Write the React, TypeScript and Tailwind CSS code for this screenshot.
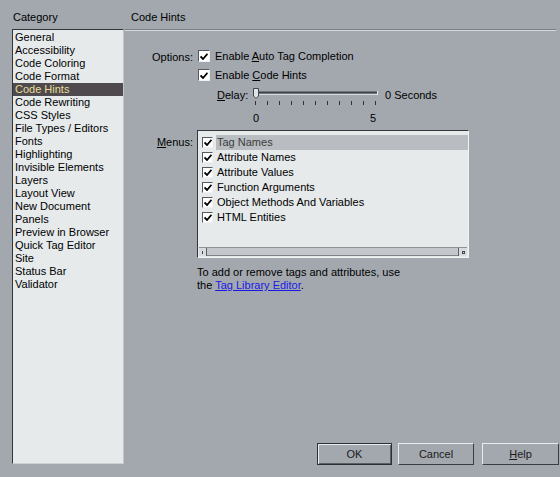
import React, { useState } from "react";

const categories = [
  "General",
  "Accessibility",
  "Code Coloring",
  "Code Format",
  "Code Hints",
  "Code Rewriting",
  "CSS Styles",
  "File Types / Editors",
  "Fonts",
  "Highlighting",
  "Invisible Elements",
  "Layers",
  "Layout View",
  "New Document",
  "Panels",
  "Preview in Browser",
  "Quick Tag Editor",
  "Site",
  "Status Bar",
  "Validator",
];

const menuItems = [
  "Tag Names",
  "Attribute Names",
  "Attribute Values",
  "Function Arguments",
  "Object Methods And Variables",
  "HTML Entities",
];

function Check({ size = 12 }: { size?: number }) {
  return (
    <span
      className="inline-flex items-center justify-center bg-white border border-t-[#55595e] border-l-[#55595e] border-b-[#eef0f2] border-r-[#eef0f2] shrink-0"
      style={{ width: size, height: size }}
    >
      <svg width="8" height="7" viewBox="0 0 8 7">
        <path d="M0.5 3.5 L3 6 L7.5 0.8" fill="none" stroke="#000" strokeWidth="1.8" />
      </svg>
    </span>
  );
}

function DelaySlider() {
  const ticks = Array.from({ length: 11 }, (_, i) => 2 + i * 12);
  return (
    <svg width="126" height="18" viewBox="0 0 126 18" className="block">
      <line x1="1" y1="4.5" x2="124" y2="4.5" stroke="#3f4348" strokeWidth="2" />
      <line x1="1" y1="6.5" x2="124" y2="6.5" stroke="#d8dce0" strokeWidth="1" />
      <line x1="124.5" y1="3" x2="124.5" y2="7" stroke="#e8ecee" strokeWidth="1" />
      {ticks.map((x) => (
        <line key={x} x1={x + 0.5} y1="13" x2={x + 0.5} y2="17" stroke="#2e3236" strokeWidth="1" />
      ))}
      <path d="M0.5 0.5 H5.5 V8 L3 10.5 L0.5 8 Z" fill="#dfe3e6" stroke="#40454a" strokeWidth="1" />
    </svg>
  );
}

export default function App() {
  const [selected, setSelected] = useState("Code Hints");

  return (
    <div
      className="w-[560px] h-[477px] bg-[#a3a8ae] flex text-[11px] leading-[13px] text-black overflow-hidden"
      style={{ fontFamily: '"Liberation Sans", Arial, sans-serif' }}
    >
      {/* Category list */}
      <div className="w-[125px] pl-[12px] flex flex-col">
        <div className="h-[29px] pt-[11px] pl-[1px]">Category</div>
        <div className="w-[112px] h-[435px] bg-[#e6eaeb] border border-t-[#33363a] border-l-[#33363a] border-b-[#cdd1d5] border-r-[#c2c6ca] pt-[1px]">
          {categories.map((c) => (
            <div
              key={c}
              onClick={() => setSelected(c)}
              className={
                "h-[13px] pl-[2px] whitespace-nowrap cursor-default " +
                (c === selected ? "bg-[#4f4a4e] text-[#eadc98]" : "")
              }
            >
              {c}
            </div>
          ))}
        </div>
      </div>

      {/* Settings panel */}
      <div className="flex-1 flex flex-col">
        <div className="h-[30px] pt-[11px] pl-[6px] border-b border-b-[#7a7f85] shadow-[0_1px_0_#d6dadd] mr-[4px]">
          Code Hints
        </div>

        <div className="grid grid-cols-[72px_1fr] mt-[20px]">
          <div className="h-[19px] pr-[4px] text-right pt-[1px]">Options:</div>
          <div className="h-[19px] flex items-start gap-[5px] pl-[1px]">
            <Check />
            <span>
              Enable <u>A</u>uto Tag Completion
            </span>
          </div>

          <div />
          <div className="h-[19px] flex items-start gap-[5px] pl-[1px]">
            <Check />
            <span>
              Enable <u>C</u>ode Hints
            </span>
          </div>

          <div />
          <div className="flex items-start pl-[20px] pt-[1px]">
            <span className="w-[36px]">
              <u>D</u>elay:
            </span>
            <div className="flex flex-col mt-[-1px]">
              <DelaySlider />
              <div className="flex justify-between w-[124px] pr-[1px] mt-[6px]">
                <span>0</span>
                <span>5</span>
              </div>
            </div>
            <span className="ml-[6px]">0 Seconds</span>
          </div>

          <div className="pr-[4px] text-right pt-[11px]">
            <u>M</u>enus:
          </div>
          <div className="mt-[5px]">
            <div className="w-[272px] h-[128px] bg-[#e6eaeb] border border-t-[#33363a] border-l-[#33363a] border-b-[#f0f2f4] border-r-[#f0f2f4] flex flex-col pt-[4px]">
              <div className="flex-1">
                {menuItems.map((m, i) => (
                  <div key={m} className="h-[15px] flex items-center pl-[4px]">
                    <Check size={11} />
                    <span
                      className={
                        "ml-[3px] pl-[1px] h-[15px] flex items-center " +
                        (i === 0 ? "flex-1 bg-[#b9bdc1] text-[#3c3c3c]" : "")
                      }
                    >
                      {m}
                    </span>
                  </div>
                ))}
              </div>
              {/* horizontal scrollbar */}
              <div className="h-[9px] mx-[1px] mb-[1px] flex bg-[#c4c8cc] border-t border-t-[#8d9297]">
                <div className="w-[8px] h-full bg-[#d8dcdf] border-r border-r-[#5d6267] flex items-center justify-center">
                  <div className="w-[1px] h-[3px] bg-[#444]" />
                </div>
                <div className="flex-1 border-b border-b-[#7f8489]" />
                <div className="w-[9px] h-full bg-[#d8dcdf] border-l border-l-[#5d6267] flex items-center justify-center">
                  <div className="w-[3px] h-[3px] border border-[#444]" />
                </div>
              </div>
            </div>
            <div className="mt-[8px] leading-[13px]">
              <div>To add or remove tags and attributes, use</div>
              <div>
                the{" "}
                <a href="#" className="text-[#1919e6] underline">
                  Tag Library Editor
                </a>
                .
              </div>
            </div>
          </div>
        </div>

        <div className="mt-auto mb-[12px] flex gap-[6px] pl-[192px]">
          <button className="w-[75px] h-[22px] bg-[#a3a8ae] border border-[#2c2f33] shadow-[inset_1px_1px_0_#e8ecee,inset_-1px_-1px_0_#5a5f64] text-[#1a1a1a]">
            OK
          </button>
          <button className="w-[76px] h-[22px] bg-[#a3a8ae] border border-t-[#e8ecee] border-l-[#e8ecee] border-b-[#3a3e42] border-r-[#3a3e42] text-[#1a1a1a]">
            Cancel
          </button>
          <button className="w-[77px] h-[22px] ml-[2px] bg-[#a3a8ae] border border-t-[#e8ecee] border-l-[#e8ecee] border-b-[#3a3e42] border-r-[#3a3e42] text-[#1a1a1a]">
            <u>H</u>elp
          </button>
        </div>
      </div>
    </div>
  );
}
